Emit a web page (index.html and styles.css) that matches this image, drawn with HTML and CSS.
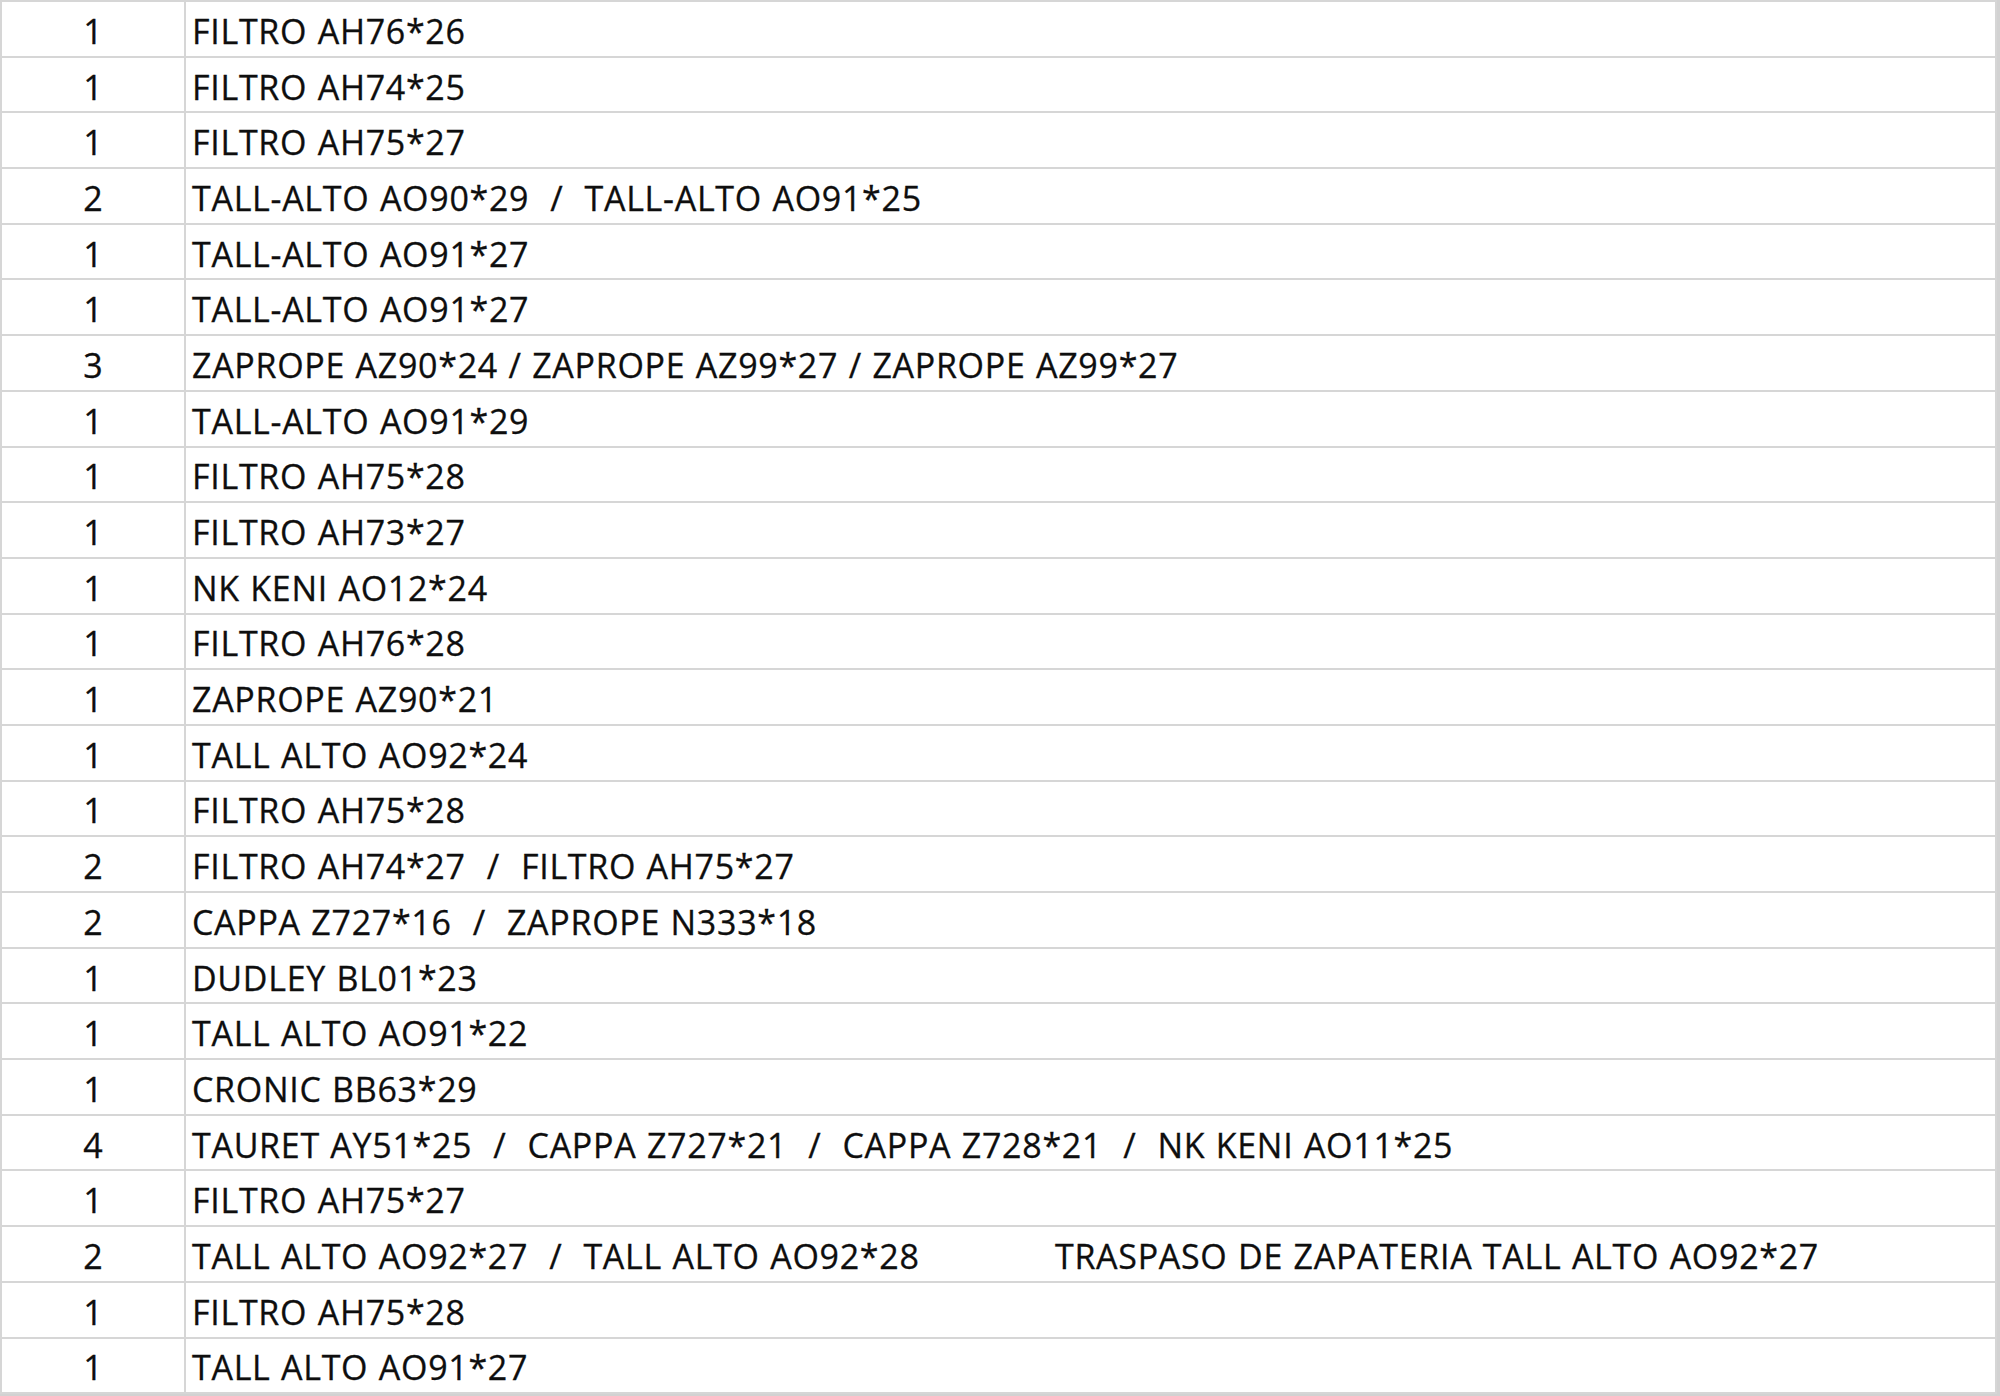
FILE: index.html
```html
<!DOCTYPE html>
<html lang="es">
<head>
    <meta charset="UTF-8">
    <meta name="viewport" content="width=device-width, initial-scale=1.0">
    <title>Pedido</title>
    <link rel="stylesheet" href="styles.css">
</head>
<body>
    <table class="sheet">
        <tr><td class="qty">1</td><td class="desc">FILTRO AH76*26</td></tr>
        <tr><td class="qty">1</td><td class="desc">FILTRO AH74*25</td></tr>
        <tr><td class="qty">1</td><td class="desc">FILTRO AH75*27</td></tr>
        <tr><td class="qty">2</td><td class="desc">TALL-ALTO AO90*29  /  TALL-ALTO AO91*25</td></tr>
        <tr><td class="qty">1</td><td class="desc">TALL-ALTO AO91*27</td></tr>
        <tr><td class="qty">1</td><td class="desc">TALL-ALTO AO91*27</td></tr>
        <tr><td class="qty">3</td><td class="desc">ZAPROPE AZ90*24 / ZAPROPE AZ99*27 / ZAPROPE AZ99*27</td></tr>
        <tr><td class="qty">1</td><td class="desc">TALL-ALTO AO91*29</td></tr>
        <tr><td class="qty">1</td><td class="desc">FILTRO AH75*28</td></tr>
        <tr><td class="qty">1</td><td class="desc">FILTRO AH73*27</td></tr>
        <tr><td class="qty">1</td><td class="desc">NK KENI AO12*24</td></tr>
        <tr><td class="qty">1</td><td class="desc">FILTRO AH76*28</td></tr>
        <tr><td class="qty">1</td><td class="desc">ZAPROPE AZ90*21</td></tr>
        <tr><td class="qty">1</td><td class="desc">TALL ALTO AO92*24</td></tr>
        <tr><td class="qty">1</td><td class="desc">FILTRO AH75*28</td></tr>
        <tr><td class="qty">2</td><td class="desc">FILTRO AH74*27  /  FILTRO AH75*27</td></tr>
        <tr><td class="qty">2</td><td class="desc">CAPPA Z727*16  /  ZAPROPE N333*18</td></tr>
        <tr><td class="qty">1</td><td class="desc">DUDLEY BL01*23</td></tr>
        <tr><td class="qty">1</td><td class="desc">TALL ALTO AO91*22</td></tr>
        <tr><td class="qty">1</td><td class="desc">CRONIC BB63*29</td></tr>
        <tr><td class="qty">4</td><td class="desc">TAURET AY51*25  /  CAPPA Z727*21  /  CAPPA Z728*21  /  NK KENI AO11*25</td></tr>
        <tr><td class="qty">1</td><td class="desc">FILTRO AH75*27</td></tr>
        <tr><td class="qty">2</td><td class="desc"><span class="main">TALL ALTO AO92*27  /  TALL ALTO AO92*28</span><span class="note">TRASPASO DE ZAPATERIA TALL ALTO AO92*27</span></td></tr>
        <tr><td class="qty">1</td><td class="desc">FILTRO AH75*28</td></tr>
        <tr><td class="qty">1</td><td class="desc">TALL ALTO AO91*27</td></tr>
    </table>
</body>
</html>
```

FILE: styles.css
```css
/* sheet look, like a spreadsheet screenshot */
body {
    margin: 0;
    background-color: #d2d2d2;
    font-family: "Open Sans", "Liberation Sans", sans-serif;
    color: #0e0e0e;
}

.sheet {
    width: 1997px;
    border-collapse: collapse;
    background-color: #fff;
    table-layout: fixed;
}

.sheet td {
    height: 49.7px;
    padding: 4px 0 0 0;
    border: 2px solid #d6d6d6;
    font-size: 34px;
    line-height: 1;
    white-space: pre;
    vertical-align: middle;
    -webkit-text-stroke: 0.3px #0e0e0e;
}

.sheet .qty {
    width: 182px;
    text-align: center;
}

.sheet .desc {
    padding-left: 6px;
    letter-spacing: 0.7px;
    word-spacing: 1px;
}

.main {
    display: inline-block;
    width: 863px;
}
```
